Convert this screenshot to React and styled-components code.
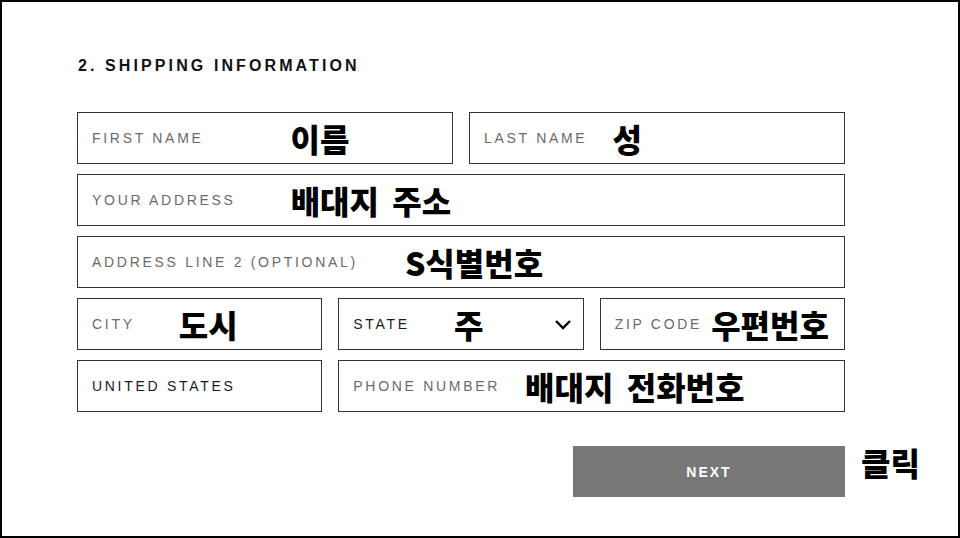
import styled, { createGlobalStyle } from 'styled-components'

const GlobalStyle = createGlobalStyle`
  html, body {
    margin: 0;
    padding: 0;
    background: #fff;
  }
  * {
    box-sizing: border-box;
  }
`

const Page = styled.div`
  width: 960px;
  height: 538px;
  border: 2px solid #000;
  background: #fff;
  padding: 54px 0 0 75px;
  font-family: 'Liberation Sans', Arial, sans-serif;
`

const Form = styled.div`
  width: 768px;
`

const Title = styled.h2`
  margin: 0 0 36px 1px;
  font-size: 16px;
  font-weight: 700;
  letter-spacing: 3.1px;
  color: #111;
  line-height: 20px;
`

const Grid = styled.div`
  display: grid;
  grid-template-columns: repeat(6, 1fr);
  gap: 10px 16px;
`

const Field = styled.div`
  grid-column: span ${(p) => p.span};
  height: 52px;
  border: 1px solid #333;
  display: flex;
  align-items: center;
  padding: 0 11px 0 14px;
`

const Label = styled.span`
  font-size: 14px;
  letter-spacing: 2.7px;
  color: ${(p) => (p.dark ? '#1a1a1a' : '#6a6a6a')};
  white-space: nowrap;
`

const Note = styled.span`
  margin-left: ${(p) => p.gap}px;
  font-family: 'Noto Sans CJK KR', sans-serif;
  font-weight: 900;
  font-size: 32px;
  line-height: 1;
  color: #000;
  white-space: nowrap;
  word-spacing: 6px;
`

const Chevron = styled.svg`
  margin-left: auto;
  width: 18px;
  height: 12px;
`

const ButtonRow = styled.div`
  display: flex;
  justify-content: flex-end;
  margin-top: 34px;
`

const ButtonWrap = styled.div`
  position: relative;
`

const NextButton = styled.button`
  width: 272px;
  height: 51px;
  border: none;
  background: #777;
  color: #fff;
  font-family: 'Liberation Sans', Arial, sans-serif;
  font-weight: 700;
  font-size: 14px;
  letter-spacing: 2px;
`

const ClickNote = styled(Note)`
  position: absolute;
  left: 100%;
  top: 0;
  margin-left: 16px;
`

const fields = [
  { span: 3, label: 'FIRST NAME', note: '이름', gap: 87 },
  { span: 3, label: 'LAST NAME', note: '성', gap: 25 },
  { span: 6, label: 'YOUR ADDRESS', note: '배대지 주소', gap: 55 },
  { span: 6, label: 'ADDRESS LINE 2 (OPTIONAL)', note: 'S식별번호', gap: 47 },
  { span: 2, label: 'CITY', note: '도시', gap: 44 },
  { span: 2, label: 'STATE', note: '주', gap: 44, dark: true, select: true },
  { span: 2, label: 'ZIP CODE', note: '우편번호', gap: 9 },
  { span: 2, label: 'UNITED STATES', dark: true },
  { span: 4, label: 'PHONE NUMBER', note: '배대지 전화번호', gap: 25 },
]

const App = () => {
  return (
    <>
      <GlobalStyle />
      <Page>
        <Form>
          <Title>2. SHIPPING INFORMATION</Title>
          <Grid>
            {fields.map((f) => (
              <Field key={f.label} span={f.span}>
                <Label dark={f.dark}>{f.label}</Label>
                {f.note && <Note gap={f.gap}>{f.note}</Note>}
                {f.select && (
                  <Chevron viewBox="0 0 18 12">
                    <path d="M2 3 L9 10 L16 3" fill="none" stroke="#000" strokeWidth="2.4" />
                  </Chevron>
                )}
              </Field>
            ))}
          </Grid>
          <ButtonRow>
            <ButtonWrap>
              <NextButton>NEXT</NextButton>
              <ClickNote>클릭</ClickNote>
            </ButtonWrap>
          </ButtonRow>
        </Form>
      </Page>
    </>
  )
}

export default App
